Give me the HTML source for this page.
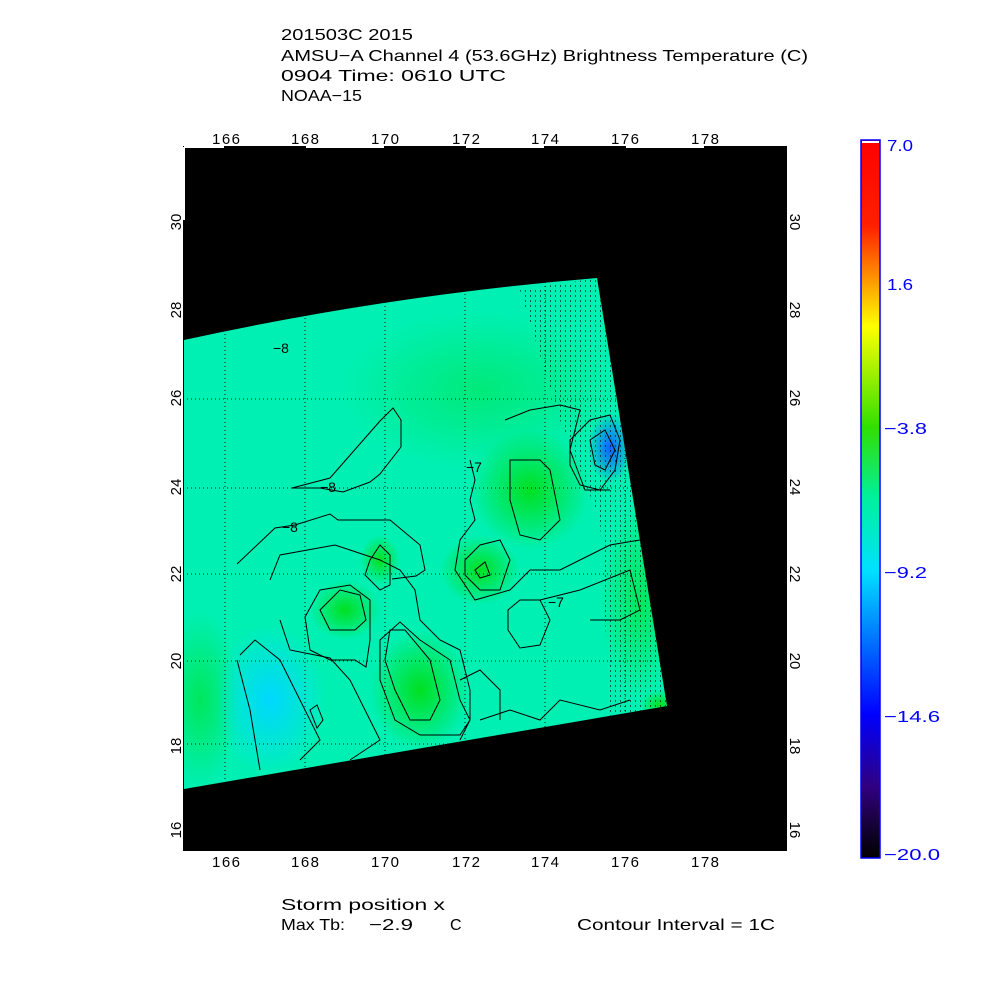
<!DOCTYPE html>
<html><head><meta charset="utf-8"><style>
html,body{margin:0;padding:0;background:#fff;}
svg{display:block;font-family:"Liberation Sans",sans-serif;}
</style></head><body>
<svg width="1000" height="1000" viewBox="0 0 1000 1000" xmlns="http://www.w3.org/2000/svg">
<defs>
<linearGradient id="cb" x1="0" y1="0" x2="0" y2="1">
<stop offset="0" stop-color="#ff0000"/>
<stop offset="0.12" stop-color="#ff2000"/>
<stop offset="0.2" stop-color="#ffa000"/>
<stop offset="0.26" stop-color="#ffff00"/>
<stop offset="0.4" stop-color="#30e000"/>
<stop offset="0.5" stop-color="#00f0a0"/>
<stop offset="0.6" stop-color="#00e0ff"/>
<stop offset="0.8" stop-color="#0000ff"/>
<stop offset="0.9" stop-color="#300080"/>
<stop offset="1" stop-color="#000000"/>
</linearGradient>
<radialGradient id="g1" cx="0.5" cy="0.5" r="0.5"><stop offset="0" stop-color="#00e020"/><stop offset="1" stop-color="#00e020" stop-opacity="0"/></radialGradient>
<radialGradient id="c1" cx="0.5" cy="0.5" r="0.5"><stop offset="0" stop-color="#00d8ff"/><stop offset="1" stop-color="#00d8ff" stop-opacity="0"/></radialGradient>
<radialGradient id="b1" cx="0.5" cy="0.5" r="0.5"><stop offset="0" stop-color="#1060ff"/><stop offset="1" stop-color="#1060ff" stop-opacity="0"/></radialGradient>
<clipPath id="sw"><path d="M184,340 Q390,295 597,278 L667,706 L184,789 Z"/></clipPath>
<pattern id="dots" width="5" height="5" patternUnits="userSpaceOnUse"><rect width="1" height="2" fill="#000"/></pattern>
</defs>
<g font-size="16" fill="#000">
<text x="281" y="40" textLength="132" lengthAdjust="spacingAndGlyphs">201503C 2015</text>
<text x="281" y="61" textLength="527" lengthAdjust="spacingAndGlyphs">AMSU−A Channel 4 (53.6GHz) Brightness Temperature (C)</text>
<text x="281" y="81" textLength="225" lengthAdjust="spacingAndGlyphs">0904 Time: 0610 UTC</text>
<text x="281" y="101" textLength="81" lengthAdjust="spacingAndGlyphs">NOAA−15</text>
</g>
<rect x="183" y="146" width="604" height="705" fill="#000"/>
<g clip-path="url(#sw)">
<rect x="184" y="270" width="490" height="530" fill="#00f0b4"/>
<ellipse cx="480" cy="390" rx="140" ry="80" fill="url(#g1)" opacity="0.4"/>
<ellipse cx="530" cy="490" rx="60" ry="60" fill="url(#g1)"/>
<ellipse cx="480" cy="570" rx="40" ry="35" fill="url(#g1)"/>
<ellipse cx="420" cy="690" rx="50" ry="60" fill="url(#g1)"/>
<ellipse cx="345" cy="610" rx="35" ry="30" fill="url(#g1)"/>
<ellipse cx="380" cy="560" rx="20" ry="25" fill="url(#g1)"/>
<ellipse cx="200" cy="700" rx="40" ry="90" fill="url(#g1)" opacity="0.6"/>
<ellipse cx="640" cy="600" rx="40" ry="100" fill="url(#g1)" opacity="0.6"/>
<ellipse cx="270" cy="700" rx="55" ry="75" fill="url(#c1)"/>
<ellipse cx="610" cy="448" rx="22" ry="35" fill="url(#b1)"/>
<ellipse cx="660" cy="705" rx="20" ry="15" fill="url(#g1)"/>
<path d="M520,290 L597,278 L667,706 L610,716 L600,520 L560,420 Z" fill="url(#dots)" opacity="0.6"/>
<g fill="none" stroke="#000" stroke-width="1">
<path d="M292,488 L330,478 L380,421 L393,408 L401,420 L401,447 L380,474 L370,482 L343,492 L320,488 L292,488"/>
<path d="M237,564 L275,528 L295,525 L330,514 L338,520 L390,520 L420,545 L425,570 L416,576 L392,579"/>
<path d="M270,580 L280,555 L335,545 L350,550 L380,560 L400,570 L415,590 L420,620 L440,640 L460,650 L470,690 L470,720 L460,740"/>
<path d="M280,620 L290,650 L330,658 L350,680 L370,720 L380,740 L350,760"/>
<path d="M320,610 L340,590 L360,595 L366,620 L355,630 L330,630 Z"/>
<path d="M305,617 L320,590 L350,585 L370,600 L370,640 L366,667 L355,660 L330,660 L310,650 Z"/>
<path d="M370,560 L380,545 L390,555 L390,585 L380,590 L365,575 Z"/>
<path d="M390,630 L405,630 L430,660 L440,700 L430,720 L410,720 L395,690 L385,660 Z"/>
<path d="M380,640 L400,622 L420,640 L450,660 L460,700 L470,720 L460,735 L420,735 L395,720 L380,680 Z"/>
<path d="M465,560 L480,545 L500,540 L510,560 L500,590 L480,590 L465,575 Z"/>
<path d="M475,570 L485,562 L490,575 L480,578 Z"/>
<path d="M470,460 L475,480 L470,500 L475,520 L460,540 L455,570 L475,600 L510,590 L530,570 L560,570 L590,555 L610,545 L640,540"/>
<path d="M510,460 L540,460 L550,470 L560,520 L540,540 L520,535 L510,500 Z"/>
<path d="M505,420 L530,410 L560,405 L580,410 L570,450 L585,490 L610,490"/>
<path d="M508,610 L520,600 L540,600 L550,620 L540,645 L520,648 L508,630 Z"/>
<path d="M570,440 L590,420 L610,415 L620,440 L615,470 L600,490 L580,485 L570,465 Z"/>
<path d="M590,440 L605,430 L615,450 L605,470 L595,465 Z"/>
<path d="M540,600 L580,590 L630,570 L640,610 L620,620 L590,620"/>
<path d="M240,655 L255,640 L280,660 L300,700 L320,740 L300,760"/>
<path d="M237,660 L250,710 L255,740 L260,770"/>
<path d="M310,710 L317,705 L323,720 L317,728 Z"/>
<path d="M480,720 L510,710 L540,720 L560,700 L600,710 L630,700"/>
<path d="M460,680 L480,670 L500,690 L500,720"/>
</g>
<g font-size="14" fill="#000">
<text x="273" y="353">−8</text>
<text x="320" y="492">−8</text>
<text x="282" y="532">−8</text>
<text x="548" y="607">−7</text>
<text x="466" y="472">−7</text>
</g>
</g>
<g stroke="#000" stroke-width="1" stroke-dasharray="1,3" opacity="0.9">
<path d="M225,146 V851 M305,146 V851 M385,146 V851 M465,146 V851 M545,146 V851 M625,146 V851 M705,146 V851"/>
<path d="M183,399 H787 M183,488 H787 M183,574 H787 M183,661 H787 M183,744 H787"/>
</g>
<g stroke="#fff" stroke-width="2" fill="none">
<path d="M184,147 H224 M306,147 H384 M466,147 H544 M626,147 H704"/>
<path d="M184,147 V220"/>
</g>
<g font-size="15" fill="#000" text-anchor="middle">
<text x="226" y="144" textLength="28">166</text><text x="305" y="144" textLength="28">168</text><text x="385" y="144" textLength="28">170</text><text x="466" y="144" textLength="28">172</text><text x="545" y="144" textLength="28">174</text><text x="625" y="144" textLength="28">176</text><text x="705" y="144" textLength="28">178</text>
<text x="226" y="867" textLength="28">166</text><text x="305" y="867" textLength="28">168</text><text x="385" y="867" textLength="28">170</text><text x="466" y="867" textLength="28">172</text><text x="545" y="867" textLength="28">174</text><text x="625" y="867" textLength="28">176</text><text x="705" y="867" textLength="28">178</text>
</g>
<g font-size="15" fill="#000" text-anchor="middle">
<text transform="translate(181,222) rotate(-90)">30</text>
<text transform="translate(181,310) rotate(-90)">28</text>
<text transform="translate(181,398) rotate(-90)">26</text>
<text transform="translate(181,487) rotate(-90)">24</text>
<text transform="translate(181,574) rotate(-90)">22</text>
<text transform="translate(181,661) rotate(-90)">20</text>
<text transform="translate(181,746) rotate(-90)">18</text>
<text transform="translate(181,830) rotate(-90)">16</text>
<text transform="translate(790,222) rotate(90)">30</text>
<text transform="translate(790,310) rotate(90)">28</text>
<text transform="translate(790,398) rotate(90)">26</text>
<text transform="translate(790,487) rotate(90)">24</text>
<text transform="translate(790,574) rotate(90)">22</text>
<text transform="translate(790,661) rotate(90)">20</text>
<text transform="translate(790,746) rotate(90)">18</text>
<text transform="translate(790,830) rotate(90)">16</text>
</g>
<rect x="861" y="140" width="19" height="718" fill="url(#cb)" stroke="#0000ff" stroke-width="1.5"/>
<rect x="862" y="141" width="17" height="2" fill="#fff"/>
<g font-size="16" fill="#0000ff">
<text x="887" y="151" textLength="26" lengthAdjust="spacingAndGlyphs">7.0</text>
<text x="887" y="290" textLength="26" lengthAdjust="spacingAndGlyphs">1.6</text>
<text x="884" y="434" textLength="43" lengthAdjust="spacingAndGlyphs">−3.8</text>
<text x="884" y="578" textLength="43" lengthAdjust="spacingAndGlyphs">−9.2</text>
<text x="884" y="722" textLength="56" lengthAdjust="spacingAndGlyphs">−14.6</text>
<text x="884" y="860" textLength="56" lengthAdjust="spacingAndGlyphs">−20.0</text>
</g>
<g font-size="16" fill="#000">
<text x="281" y="910" textLength="164" lengthAdjust="spacingAndGlyphs">Storm position x</text>
<text x="281" y="930" textLength="64" lengthAdjust="spacingAndGlyphs">Max Tb:</text>
<text x="369" y="930" textLength="44" lengthAdjust="spacingAndGlyphs">−2.9</text>
<text x="450" y="930">C</text>
<text x="577" y="930" textLength="198" lengthAdjust="spacingAndGlyphs">Contour Interval = 1C</text>
</g>
</svg>
</body></html>
